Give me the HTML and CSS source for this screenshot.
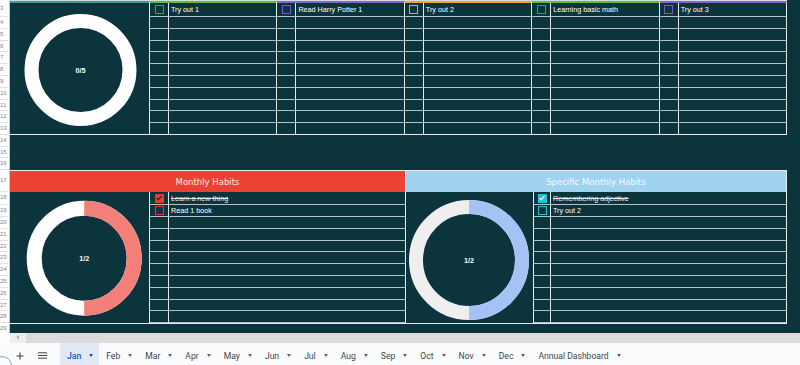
FILE: index.html
```html
<!DOCTYPE html>
<html lang="en">
<head>
    <meta charset="UTF-8">
    <meta name="viewport" content="width=device-width, initial-scale=1.0">
    <title>Habit Tracker - Jan</title>
    <link rel="stylesheet" href="styles.css">
</head>
<body>
    <div class="sheet">
        <div class="rowhead">
            <div class="rh tall">3</div>
            <div class="rh">4</div><div class="rh">5</div><div class="rh">6</div><div class="rh">7</div><div class="rh">8</div>
            <div class="rh">9</div><div class="rh">10</div><div class="rh">11</div><div class="rh">12</div><div class="rh">13</div>
            <div class="rh gap">14</div><div class="rh gap">15</div><div class="rh gap">16</div>
            <div class="rh head">17</div>
            <div class="rh first">18</div><div class="rh second">19</div>
            <div class="rh">20</div><div class="rh">21</div><div class="rh">22</div><div class="rh">23</div><div class="rh">24</div>
            <div class="rh">25</div><div class="rh">26</div><div class="rh">27</div><div class="rh">28</div>
            <div class="rh end">29</div>
        </div>

        <div class="canvas">
            <!-- weekly habits -->
            <section class="weekly">
                <div class="ring-cell">
                    <svg width="139" height="131" viewBox="0 0 139 131">
                        <circle cx="70.5" cy="67" r="49" fill="none" stroke="#ffffff" stroke-width="14"/>
                        <text x="70.5" y="69.5" class="ring-label">0/5</text>
                    </svg>
                </div>
                <div class="habit green">
                    <div class="row"><span class="box"><i class="check"></i></span><span class="name">Try out 1</span></div>
                    <div class="blank"></div>
                </div>
                <div class="habit purple">
                    <div class="row"><span class="box"><i class="check"></i></span><span class="name">Read Harry Potter 1</span></div>
                    <div class="blank"></div>
                </div>
                <div class="habit orange">
                    <div class="row"><span class="box"><i class="check"></i></span><span class="name">Try out 2</span></div>
                    <div class="blank"></div>
                </div>
                <div class="habit green">
                    <div class="row"><span class="box"><i class="check"></i></span><span class="name">Learning basic math</span></div>
                    <div class="blank"></div>
                </div>
                <div class="habit purple">
                    <div class="row"><span class="box"><i class="check"></i></span><span class="name">Try out 3</span></div>
                    <div class="blank"></div>
                </div>
            </section>

            <!-- monthly habits -->
            <section class="monthly">
                <div class="panel red">
                    <div class="panel-title">Monthly Habits</div>
                    <div class="panel-body">
                        <div class="ring-cell">
                            <svg width="139" height="131" viewBox="0 0 139 131">
                                <circle cx="74.2" cy="66.2" r="50" fill="none" stroke="#ffffff" stroke-width="15"/>
                                <path d="M74.2 16.2 A50 50 0 0 1 74.2 116.2" fill="none" stroke="#f28079" stroke-width="15"/>
                                <text x="74.2" y="68.7" class="ring-label">1/2</text>
                            </svg>
                        </div>
                        <div class="list">
                            <div class="row first">
                                <span class="box"><i class="check done"><svg width="6" height="6" viewBox="0 0 6 6"><path d="M0.6 3.1 L2.3 4.7 L5.4 1.2" fill="none" stroke="#3b1212" stroke-width="1.1"/></svg></i></span>
                                <span class="name struck">Learn a new thing</span>
                            </div>
                            <div class="row"><span class="box"><i class="check"></i></span><span class="name">Read 1 book</span></div>
                            <div class="blank"></div>
                        </div>
                    </div>
                </div>
                <div class="panel blue">
                    <div class="panel-title">Specific Monthly Habits</div>
                    <div class="panel-body">
                        <div class="ring-cell">
                            <svg width="127" height="131" viewBox="0 0 127 131">
                                <circle cx="63" cy="68" r="53" fill="none" stroke="#efefef" stroke-width="14"/>
                                <path d="M63 15 A53 53 0 0 1 63 121" fill="none" stroke="#a4c2f4" stroke-width="14"/>
                                <text x="63" y="70.5" class="ring-label">1/2</text>
                            </svg>
                        </div>
                        <div class="list">
                            <div class="row first">
                                <span class="box"><i class="check done"><svg width="6" height="6" viewBox="0 0 6 6"><path d="M0.6 3.1 L2.3 4.7 L5.4 1.2" fill="none" stroke="#ffffff" stroke-width="1.1"/></svg></i></span>
                                <span class="name struck">Remembering adjective</span>
                            </div>
                            <div class="row"><span class="box"><i class="check"></i></span><span class="name">Try out 2</span></div>
                            <div class="blank"></div>
                        </div>
                    </div>
                </div>
            </section>
        </div>
    </div>

    <div class="hscroll">
        <span class="lead"></span>
        <span class="scroll-left">&lsaquo;</span>
        <span class="track"></span>
    </div>

    <div class="tabs">
        <span class="tool">
            <svg width="8" height="8" viewBox="0 0 8 8"><path d="M4 0.5 V7.5 M0.5 4 H7.5" stroke="#444746" stroke-width="1.1"/></svg>
        </span>
        <span class="tool">
            <svg width="9" height="7" viewBox="0 0 9 7"><path d="M0 0.8 H9 M0 3.5 H9 M0 6.2 H9" stroke="#444746" stroke-width="1"/></svg>
        </span>
        <span class="tab active">Jan<i class="caret"></i></span>
        <span class="tab">Feb<i class="caret"></i></span>
        <span class="tab">Mar<i class="caret"></i></span>
        <span class="tab">Apr<i class="caret"></i></span>
        <span class="tab">May<i class="caret"></i></span>
        <span class="tab">Jun<i class="caret"></i></span>
        <span class="tab">Jul<i class="caret"></i></span>
        <span class="tab">Aug<i class="caret"></i></span>
        <span class="tab">Sep<i class="caret"></i></span>
        <span class="tab">Oct<i class="caret"></i></span>
        <span class="tab">Nov<i class="caret"></i></span>
        <span class="tab">Dec<i class="caret"></i></span>
        <span class="tab">Annual Dashboard<i class="caret"></i></span>
    </div>

    <span class="explore"></span>
</body>
</html>
```

FILE: styles.css
```css
body {
    margin: 0;
    width: 800px;
    height: 365px;
    overflow: hidden;
    position: relative;
    background-color: #fff;
    font-family: "Liberation Sans", Arial, sans-serif;
}
.sheet {
    display: flex;
    height: 333px;
}

/* row numbers on the left, mostly scrolled out of view */
.rowhead {
    width: 10px;
    flex: none;
    box-sizing: border-box;
    border-right: 1px solid #c4c7c5;
    background-color: #fff;
    overflow: hidden;
}
.rh {
    height: 11.8px;
    box-sizing: border-box;
    border-bottom: 1px solid #e1e3e1;
    padding-right: 8px;
    font-size: 6px;
    line-height: 10px;
    color: #80868b;
    text-align: right;
    white-space: nowrap;
}
.rh.tall { height: 17px; line-height: 16px; }
.rh.gap { height: 11.67px; }
.rh.head { height: 22px; line-height: 21px; }
.rh.first { height: 13px; }
.rh.second { height: 12px; }
.rh.end { height: 10px; border-bottom: none; }

.canvas {
    flex: 1;
    background-color: #0c343d;
}

/* shared grid pieces */
.row {
    display: flex;
    height: 12px;
    box-sizing: border-box;
    border-bottom: 1px solid #b3c2c4;
}
.box {
    width: var(--box, 19px);
    flex: none;
    box-sizing: border-box;
    border-right: 1px solid #e4e9e9;
    display: flex;
    align-items: center;
    justify-content: center;
}
.name {
    flex: 1;
    padding-left: 2px;
    display: flex;
    align-items: center;
    color: #fff;
    font-size: 7.2px;
    white-space: nowrap;
    overflow: hidden;
}
.name.struck {
    text-decoration: line-through;
    color: #e8e8e8;
}
.check {
    width: 9px;
    height: 9px;
    box-sizing: border-box;
    border: 1.4px solid var(--tick);
    display: flex;
    align-items: center;
    justify-content: center;
}
.check.done {
    background-color: var(--tick);
}
.blank {
    background-image:
        linear-gradient(to right, transparent calc(var(--box, 19px) - 1px), #e4e9e9 calc(var(--box, 19px) - 1px), #e4e9e9 var(--box, 19px), transparent var(--box, 19px)),
        repeating-linear-gradient(to bottom, transparent 0, transparent 10.8px, #b3c2c4 10.8px, #b3c2c4 11.8px);
}
.ring-cell {
    flex: none;
    box-sizing: border-box;
    border-right: 1px solid #e8eded;
}
.ring-cell svg {
    display: block;
}
.ring-label {
    fill: #fff;
    font-family: "Liberation Sans", Arial, sans-serif;
    font-size: 7.2px;
    font-weight: bold;
    text-anchor: middle;
}

/* weekly block */
.weekly {
    display: flex;
    width: 777px;
    border-top: 1px solid #d6dcdc;
    border-bottom: 1px solid #e8eded;
}
.weekly .ring-cell {
    width: 140px;
    border-top: 2px solid #3a9d8d;
}
.habit {
    flex: 1;
    min-width: 0;
    border-top: 2px solid var(--line);
    border-right: 1px solid #e4e9e9;
}
.habit .row {
    height: 14px;
}
.habit .blank {
    height: 117px;
}
.habit.green { --line: #58c03a; --tick: #3f9f3f; }
.habit.purple { --line: #8b62d2; --tick: #7a55cc; }
.habit.orange { --line: #f0a62c; --tick: #c4c024; }

/* monthly block */
.monthly {
    display: flex;
    width: 777px;
    margin-top: 35px;
    border-top: 1px solid #e8eded;
    border-bottom: 1px solid #e8eded;
}
.panel {
    display: flex;
    flex-direction: column;
    border-right: 1px solid #e8eded;
}
.panel.red {
    width: 395px;
    --tick: #e53935;
}
.panel.blue {
    flex: 1;
    --tick: #1ec3cf;
    --box: 17px;
}
.panel-title {
    height: 21px;
    display: flex;
    align-items: center;
    justify-content: center;
    font-family: "DejaVu Sans", sans-serif;
    font-size: 8.5px;
}
.red .panel-title {
    background-color: #ea4335;
    color: #fde6e3;
}
.blue .panel-title {
    background-color: #9fd3f0;
    color: #f3faff;
}
.panel-body {
    display: flex;
    height: 131px;
}
.red .ring-cell { width: 140px; }
.blue .ring-cell { width: 128px; }
.list {
    flex: 1;
    display: flex;
    flex-direction: column;
}
.list .row.first {
    height: 13px;
}
.list .blank {
    flex: 1;
}

/* horizontal scrollbar */
.hscroll {
    display: flex;
    height: 10px;
    background-color: #dadada;
}
.hscroll .lead {
    width: 10px;
    background-color: #fff;
}
.scroll-left {
    width: 16px;
    background-color: #eeeeee;
    color: #5f6368;
    font-size: 9px;
    line-height: 9px;
    text-align: center;
}
.hscroll .track {
    flex: 1;
}

/* sheet tabs */
.tabs {
    display: flex;
    height: 22px;
    padding-left: 8px;
    background-color: #f9fbfd;
    font-family: Roboto, "Liberation Sans", sans-serif;
}
.tool {
    width: 23px;
    display: flex;
    align-items: center;
    justify-content: center;
    padding-top: 3px;
}
.tool + .tool {
    margin-right: 6px;
}
.tab {
    display: flex;
    align-items: center;
    gap: 8px;
    padding: 3px 6px 0 7px;
    font-size: 8.6px;
    color: #444746;
}
.tab.active {
    background-color: #e1e9f7;
    color: #0b57d0;
    font-weight: 500;
}
.caret {
    width: 0;
    height: 0;
    border-left: 2.5px solid transparent;
    border-right: 2.5px solid transparent;
    border-top: 3px solid #5f6368;
}
.tab.active .caret {
    border-top-color: #0b57d0;
}
.explore {
    position: absolute;
    left: -8px;
    top: 356px;
    width: 20px;
    height: 20px;
    box-sizing: border-box;
    border: 1.5px solid #93a2bd;
    border-radius: 50%;
}
```
